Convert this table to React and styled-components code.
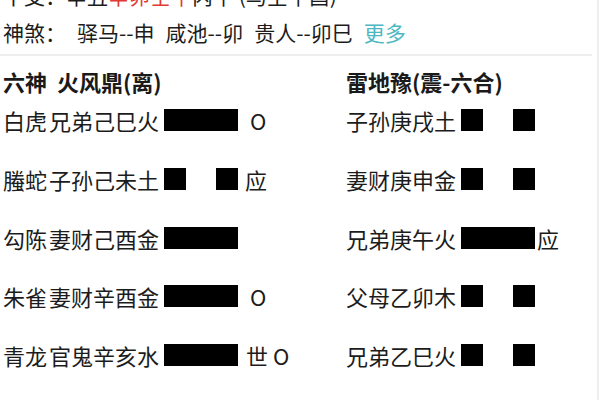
import React from "react";
import styled, { createGlobalStyle } from "styled-components";

const Global = createGlobalStyle`
  html, body {
    margin: 0;
    padding: 0;
    background: #ffffff;
    overflow: hidden;
  }
  body {
    font-family: "Noto Sans CJK SC", "Noto Sans", sans-serif;
    color: #1c1c1c;
  }
`;

const Page = styled.div`
  width: 597px;
  height: 400px;
  border-right: 2px solid #eeeeee;
  overflow: hidden;
`;

const InfoBlock = styled.div`
  margin-top: -23px;
  padding-left: 3px;
`;

const InfoLine = styled.div`
  display: flex;
  align-items: center;
  gap: ${(p) => p.$gap || 0}px;
  height: 37px;
  font-size: 21px;
  line-height: 37px;
  white-space: nowrap;
`;

const Accent = styled.span`
  color: ${(p) => (p.$tone === "red" ? "#e23a32" : "#4db8c3")};
`;

const Divider = styled.div`
  margin-top: 3px;
  width: 592px;
  height: 2px;
  background: #eeeeee;
`;

const Columns = styled.div`
  display: grid;
  grid-template-columns: 346px 1fr;
  margin-top: 14px;
`;

const Column = styled.div`
  display: flex;
  flex-direction: column;
  padding-left: ${(p) => p.$pad || 0}px;
`;

const ColumnTitle = styled.div`
  display: flex;
  gap: 10px;
  height: 22px;
  font-size: 22px;
  line-height: 22px;
  font-weight: 700;
  color: #1a1a1a;
  white-space: nowrap;
`;

const YaoList = styled.div`
  display: flex;
  flex-direction: column;
  gap: 36.75px;
  margin-top: 17px;
`;

const YaoRow = styled.div`
  display: flex;
  align-items: center;
  height: 22px;
  font-size: 22px;
  line-height: 22px;
  white-space: nowrap;
`;

const God = styled.span`
  margin-right: 2px;
`;

const Name = styled.span`
  margin-right: 5px;
`;

const Line = styled.div`
  display: flex;
  justify-content: space-between;
  width: 74px;
  height: 22px;
`;

const Seg = styled.div`
  height: 22px;
  width: ${(p) => (p.$full ? "74px" : "22px")};
  background: #000000;
`;

const Mark = styled.span`
  margin-left: ${(p) => p.$gap || 0}px;
`;

function Yao({ god, name, yang, mark, gap }) {
  return (
    <YaoRow>
      {god && <God>{god}</God>}
      <Name>{name}</Name>
      <Line>
        {yang ? (
          <Seg $full />
        ) : (
          <>
            <Seg />
            <Seg />
          </>
        )}
      </Line>
      {mark && <Mark $gap={gap}>{mark}</Mark>}
    </YaoRow>
  );
}

const left = [
  { god: "白虎", name: "兄弟己巳火", yang: true, mark: "O", gap: 12 },
  { god: "螣蛇", name: "子孙己未土", yang: false, mark: "应", gap: 7 },
  { god: "勾陈", name: "妻财己酉金", yang: true },
  { god: "朱雀", name: "妻财辛酉金", yang: true, mark: "O", gap: 12 },
  { god: "青龙", name: "官鬼辛亥水", yang: true, mark: "世 O", gap: 8 },
];

const right = [
  { name: "子孙庚戌土", yang: false },
  { name: "妻财庚申金", yang: false },
  { name: "兄弟庚午火", yang: true, mark: "应", gap: 2 },
  { name: "父母乙卯木", yang: false },
  { name: "兄弟乙巳火", yang: false },
];

export default function App() {
  return (
    <>
      <Global />
      <Page>
        <InfoBlock>
          <InfoLine $gap={0}>
            <span>干支：辛丑 </span>
            <Accent $tone="red">辛卯壬午</Accent>
            <span>丙午 (马空午酉)</span>
          </InfoLine>
          <InfoLine $gap={11}>
            <span>神煞：</span>
            <span>驿马--申</span>
            <span>咸池--卯</span>
            <span>贵人--卯巳</span>
            <Accent>更多</Accent>
          </InfoLine>
        </InfoBlock>
        <Divider />
        <Columns>
          <Column $pad={3}>
            <ColumnTitle>
              <span>六神</span>
              <span>火风鼎(离)</span>
            </ColumnTitle>
            <YaoList>
              {left.map((y, i) => (
                <Yao key={i} {...y} />
              ))}
            </YaoList>
          </Column>
          <Column>
            <ColumnTitle>
              <span>雷地豫(震-六合)</span>
            </ColumnTitle>
            <YaoList>
              {right.map((y, i) => (
                <Yao key={i} {...y} />
              ))}
            </YaoList>
          </Column>
        </Columns>
      </Page>
    </>
  );
}
